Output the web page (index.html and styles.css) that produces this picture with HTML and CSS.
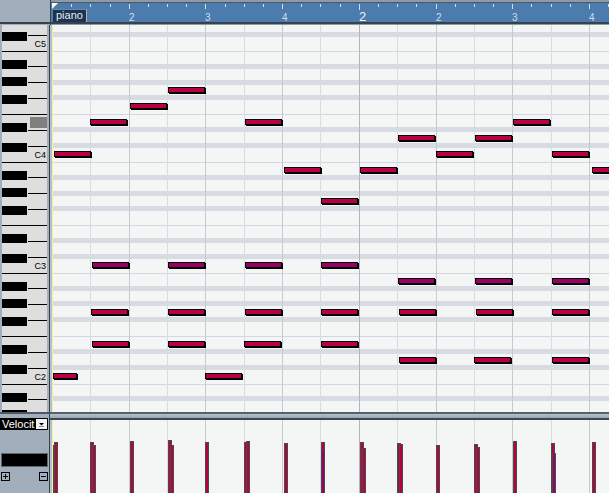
FILE: index.html
```html
<!DOCTYPE html>
<html>
<head>
<meta charset="utf-8">
<title>Key Editor</title>
<link rel="stylesheet" href="styles.css">
</head>
<body>
<div class="app">
  <div class="corner"></div>

  <div class="ruler">
    <svg class="ruler-svg" width="558" height="25" viewBox="51 0 558 25">
      <g class="ticks">
        <rect x="71" y="4" width="1" height="3"/><rect x="90" y="4" width="1" height="3"/><rect x="110" y="4" width="1" height="3"/>
        <rect x="129" y="4" width="1" height="5"/>
        <rect x="148" y="4" width="1" height="3"/><rect x="167" y="4" width="1" height="3"/><rect x="186" y="4" width="1" height="3"/>
        <rect x="205" y="4" width="1" height="5"/>
        <rect x="225" y="4" width="1" height="3"/><rect x="244" y="4" width="1" height="3"/><rect x="263" y="4" width="1" height="3"/>
        <rect x="282" y="4" width="1" height="5"/>
        <rect x="301" y="4" width="1" height="3"/><rect x="320" y="4" width="1" height="3"/><rect x="340" y="4" width="1" height="3"/>
        <rect x="359" y="4" width="1" height="6"/>
        <rect x="378" y="4" width="1" height="3"/><rect x="397" y="4" width="1" height="3"/><rect x="416" y="4" width="1" height="3"/>
        <rect x="436" y="4" width="1" height="5"/>
        <rect x="455" y="4" width="1" height="3"/><rect x="474" y="4" width="1" height="3"/><rect x="493" y="4" width="1" height="3"/>
        <rect x="512" y="4" width="1" height="5"/>
        <rect x="531" y="4" width="1" height="3"/><rect x="551" y="4" width="1" height="3"/><rect x="570" y="4" width="1" height="3"/>
        <rect x="589" y="4" width="1" height="5"/>
        <rect x="608" y="4" width="1" height="3"/>
      </g>
      <g class="beat-num">
        <text x="129" y="21">2</text>
        <text x="205" y="21">3</text>
        <text x="282" y="21">4</text>
        <text x="436" y="21">2</text>
        <text x="512" y="21">3</text>
        <text x="589" y="21">4</text>
      </g>
      <text class="bar-num" x="359" y="21">2</text>
      <polygon class="start-mark" points="52,3 58,3 52,9"/>
    </svg>
    <div class="track-label">piano</div>
  </div>

  <div class="keyboard">
    <svg width="50" height="387" viewBox="0 25 50 387">
      <rect class="kb-frame" x="0" y="25" width="50" height="387"/>
      <rect class="kb-keys" x="2" y="25" width="45" height="387"/>
      <rect class="kb-edge" x="49" y="25" width="1" height="387"/>
      <g class="kb-lines">
        <rect x="2" y="51" width="45" height="1"/>
        <rect x="2" y="114" width="45" height="1"/>
        <rect x="2" y="162" width="45" height="1"/>
        <rect x="2" y="225" width="45" height="1"/>
        <rect x="2" y="273" width="45" height="1"/>
        <rect x="2" y="336" width="45" height="1"/>
        <rect x="2" y="384" width="45" height="1"/>
        <rect x="28" y="35" width="19" height="1"/>
        <rect x="28" y="66" width="19" height="1"/><rect x="28" y="82" width="19" height="1"/><rect x="28" y="98" width="19" height="1"/>
        <rect x="28" y="130" width="19" height="1"/><rect x="28" y="146" width="19" height="1"/>
        <rect x="28" y="177" width="19" height="1"/><rect x="28" y="193" width="19" height="1"/><rect x="28" y="209" width="19" height="1"/>
        <rect x="28" y="241" width="19" height="1"/><rect x="28" y="257" width="19" height="1"/>
        <rect x="28" y="288" width="19" height="1"/><rect x="28" y="304" width="19" height="1"/><rect x="28" y="320" width="19" height="1"/>
        <rect x="28" y="352" width="19" height="1"/><rect x="28" y="368" width="19" height="1"/>
        <rect x="28" y="399" width="19" height="1"/>
      </g>
      <g class="kb-black">
        <rect x="2" y="32" width="25" height="9"/>
        <rect x="2" y="60" width="25" height="9"/><rect x="2" y="77" width="25" height="9"/><rect x="2" y="95" width="25" height="9"/>
        <rect x="2" y="123" width="25" height="9"/><rect x="2" y="143" width="25" height="9"/>
        <rect x="2" y="171" width="25" height="9"/><rect x="2" y="188" width="25" height="9"/><rect x="2" y="206" width="25" height="9"/>
        <rect x="2" y="234" width="25" height="9"/><rect x="2" y="254" width="25" height="9"/>
        <rect x="2" y="282" width="25" height="9"/><rect x="2" y="299" width="25" height="9"/><rect x="2" y="317" width="25" height="9"/>
        <rect x="2" y="345" width="25" height="9"/><rect x="2" y="365" width="25" height="9"/>
        <rect x="2" y="393" width="25" height="9"/><rect x="2" y="410" width="25" height="9"/>
      </g>
      <rect class="kb-hover" x="30" y="117" width="17" height="11"/>
      <g class="kb-label">
        <text x="46" y="47">C5</text>
        <text x="46" y="158">C4</text>
        <text x="46" y="269">C3</text>
        <text x="46" y="380">C2</text>
      </g>
    </svg>
  </div>

  <div class="editor">
    <div class="edge"></div>
    <div class="canvas">
      <svg class="grid" width="556" height="387" viewBox="53 25 556 387">
        <rect class="grid-bg" x="53" y="25" width="556" height="387"/>
        <g class="band">
          <rect x="53" y="32" width="556" height="5"/>
          <rect x="53" y="64" width="556" height="5"/>
          <rect x="53" y="80" width="556" height="5"/>
          <rect x="53" y="95" width="556" height="5"/>
          <rect x="53" y="127" width="556" height="5"/>
          <rect x="53" y="143" width="556" height="5"/>
          <rect x="53" y="175" width="556" height="5"/>
          <rect x="53" y="191" width="556" height="5"/>
          <rect x="53" y="206" width="556" height="5"/>
          <rect x="53" y="238" width="556" height="5"/>
          <rect x="53" y="254" width="556" height="5"/>
          <rect x="53" y="286" width="556" height="5"/>
          <rect x="53" y="301" width="556" height="5"/>
          <rect x="53" y="317" width="556" height="5"/>
          <rect x="53" y="349" width="556" height="5"/>
          <rect x="53" y="365" width="556" height="5"/>
          <rect x="53" y="396" width="556" height="5"/>
        </g>
        <g class="hline">
          <rect x="53" y="51" width="556" height="1"/>
          <rect x="53" y="114" width="556" height="1"/>
          <rect x="53" y="162" width="556" height="1"/>
          <rect x="53" y="225" width="556" height="1"/>
          <rect x="53" y="273" width="556" height="1"/>
          <rect x="53" y="336" width="556" height="1"/>
          <rect x="53" y="384" width="556" height="1"/>
        </g>
        <g class="vline-half">
          <rect x="90" y="25" width="1" height="387"/><rect x="167" y="25" width="1" height="387"/>
          <rect x="244" y="25" width="1" height="387"/><rect x="320" y="25" width="1" height="387"/>
          <rect x="397" y="25" width="1" height="387"/><rect x="474" y="25" width="1" height="387"/>
          <rect x="551" y="25" width="1" height="387"/>
        </g>
        <g class="vline-beat">
          <rect x="129" y="25" width="1" height="387"/><rect x="205" y="25" width="1" height="387"/>
          <rect x="282" y="25" width="1" height="387"/><rect x="436" y="25" width="1" height="387"/>
          <rect x="512" y="25" width="1" height="387"/><rect x="589" y="25" width="1" height="387"/>
        </g>
        <rect class="vline-bar" x="359" y="25" width="1" height="387"/>
      </svg>

      <div class="note" style="left:77px;top:78px;width:37px"></div>
      <div class="note" style="left:115px;top:62px;width:37px"></div>
      <div class="note" style="left:1px;top:126px;width:37px"></div>
      <div class="note" style="left:383px;top:126px;width:37px"></div>
      <div class="note" style="left:499px;top:126px;width:37px"></div>
      <div class="note" style="left:37px;top:94px;width:37px"></div>
      <div class="note" style="left:192px;top:94px;width:37px"></div>
      <div class="note" style="left:460px;top:94px;width:37px"></div>
      <div class="note" style="left:345px;top:110px;width:37px"></div>
      <div class="note" style="left:422px;top:110px;width:37px"></div>
      <div class="note" style="left:231px;top:142px;width:37px"></div>
      <div class="note" style="left:307px;top:142px;width:37px"></div>
      <div class="note" style="left:539px;top:142px;width:37px"></div>
      <div class="note" style="left:268px;top:173px;width:37px"></div>

      <div class="note purple" style="left:39px;top:237px;width:37px"></div>
      <div class="note purple" style="left:115px;top:237px;width:37px"></div>
      <div class="note purple" style="left:192px;top:237px;width:37px"></div>
      <div class="note purple" style="left:268px;top:237px;width:37px"></div>
      <div class="note purple" style="left:345px;top:253px;width:37px"></div>
      <div class="note purple" style="left:422px;top:253px;width:37px"></div>
      <div class="note purple" style="left:499px;top:253px;width:37px"></div>

      <div class="note" style="left:38px;top:284px;width:37px"></div>
      <div class="note" style="left:115px;top:284px;width:37px"></div>
      <div class="note" style="left:192px;top:284px;width:37px"></div>
      <div class="note" style="left:268px;top:284px;width:37px"></div>
      <div class="note" style="left:346px;top:284px;width:37px"></div>
      <div class="note" style="left:423px;top:284px;width:37px"></div>
      <div class="note" style="left:499px;top:284px;width:37px"></div>

      <div class="note" style="left:39px;top:316px;width:37px"></div>
      <div class="note" style="left:115px;top:316px;width:37px"></div>
      <div class="note" style="left:191px;top:316px;width:37px"></div>
      <div class="note" style="left:268px;top:316px;width:37px"></div>

      <div class="note" style="left:346px;top:332px;width:37px"></div>
      <div class="note" style="left:421px;top:332px;width:37px"></div>
      <div class="note" style="left:499px;top:332px;width:37px"></div>

      <div class="note" style="left:0px;top:348px;width:24px"></div>
      <div class="note" style="left:152px;top:348px;width:37px"></div>
    </div>
  </div>

  <div class="vel-panel">
    <div class="lane-select">
      <span class="lane-name">Velocit</span>
      <span class="lane-btn">
        <svg width="11" height="10" viewBox="0 0 11 10"><polygon points="3,4 8,4 5.5,6.5" fill="#000"/><rect x="3" y="7" width="5" height="1" fill="#8a8a8a"/></svg>
      </span>
    </div>
    <div class="lane-display"></div>
    <div class="lane-buttons">
      <svg class="sq-btn" width="9" height="9" viewBox="0 0 9 9"><rect x="0.5" y="0.5" width="8" height="8" fill="none" stroke="#000"/><rect x="2" y="4" width="5" height="1" fill="#000"/><rect x="4" y="2" width="1" height="5" fill="#000"/></svg>
      <svg class="sq-btn" width="9" height="9" viewBox="0 0 9 9"><rect x="0.5" y="0.5" width="8" height="8" fill="none" stroke="#000"/><rect x="2" y="4" width="5" height="1" fill="#000"/></svg>
    </div>
  </div>

  <div class="vel-area">
    <div class="divider"></div>
    <div class="lane">
      <div class="edge"></div>
      <div class="canvas lane-canvas">
        <svg class="grid" width="556" height="73" viewBox="53 420 556 73">
          <rect class="grid-bg" x="53" y="420" width="556" height="73"/>
          <g class="vline-half">
            <rect x="90" y="420" width="1" height="73"/><rect x="167" y="420" width="1" height="73"/>
            <rect x="244" y="420" width="1" height="73"/><rect x="320" y="420" width="1" height="73"/>
            <rect x="397" y="420" width="1" height="73"/><rect x="474" y="420" width="1" height="73"/>
            <rect x="551" y="420" width="1" height="73"/>
          </g>
          <g class="vline-beat">
            <rect x="129" y="420" width="1" height="73"/><rect x="205" y="420" width="1" height="73"/>
            <rect x="282" y="420" width="1" height="73"/><rect x="436" y="420" width="1" height="73"/>
            <rect x="512" y="420" width="1" height="73"/><rect x="589" y="420" width="1" height="73"/>
          </g>
          <rect class="vline-bar" x="359" y="420" width="1" height="73"/>
        </svg>
        <div class="bar" style="left:0px;top:25px"></div>
        <div class="bar" style="left:1px;top:22px"></div>
        <div class="bar" style="left:37px;top:22px"></div>
        <div class="bar" style="left:39px;top:25px"></div>
        <div class="bar" style="left:77px;top:21px"></div>
        <div class="bar" style="left:115px;top:20px"></div>
        <div class="bar" style="left:117px;top:25px"></div>
        <div class="bar" style="left:152px;top:22px"></div>
        <div class="bar" style="left:191px;top:22px"></div>
        <div class="bar" style="left:193px;top:21px"></div>
        <div class="bar" style="left:231px;top:23px"></div>
        <div class="bar" style="left:268px;top:22px"></div>
        <div class="bar purple" style="left:268px;top:30px"></div>
        <div class="bar" style="left:307px;top:22px"></div>
        <div class="bar" style="left:309px;top:28px"></div>
        <div class="bar" style="left:344px;top:23px"></div>
        <div class="bar" style="left:346px;top:24px"></div>
        <div class="bar" style="left:383px;top:25px"></div>
        <div class="bar" style="left:421px;top:24px"></div>
        <div class="bar" style="left:423px;top:27px"></div>
        <div class="bar" style="left:460px;top:21px"></div>
        <div class="bar" style="left:498px;top:23px"></div>
        <div class="bar purple" style="left:499px;top:33px"></div>
        <div class="bar" style="left:539px;top:22px"></div>
      </div>
    </div>
  </div>
</div>
</body>
</html>
```

FILE: styles.css
```css
* {
  box-sizing: border-box;
  margin: 0;
  padding: 0;
}

html, body {
  width: 609px;
  height: 493px;
  overflow: hidden;
  background: #a2aebb;
  font-family: "Liberation Sans", Arial, sans-serif;
}

.app {
  display: grid;
  grid-template-columns: 50px 559px;
  grid-template-rows: 25px 387px 81px;
  width: 609px;
  height: 493px;
}

/* ---------- top row ---------- */
.corner {
  background: linear-gradient(to bottom, #a2aebb 0 22px, #38424c 22px 24px, #a2aebb 24px);
}

.ruler {
  position: relative;
  border-left: 1px solid #38424c;
  background: linear-gradient(to bottom, #8e9aa6 0 2px, #4e5862 2px 3px, #4b7cad 3px 22px, #38424c 22px 24px, #8c98a4 24px);
}

.ruler-svg {
  display: block;
}

.ticks rect {
  fill: #d4dee8;
}

.beat-num text {
  font-family: "Liberation Sans", Arial, sans-serif;
  font-size: 10px;
  fill: #d4dee8;
}

.bar-num {
  font-family: "Liberation Sans", Arial, sans-serif;
  font-size: 13px;
  fill: #eef3f8;
}

.start-mark {
  fill: #ffffff;
}

.track-label {
  position: absolute;
  left: 2px;
  top: 9px;
  width: 34px;
  height: 13px;
  background: #1d3350;
  border-top: 1px solid #6a88a8;
  border-right: 1px solid #a6b6c6;
  color: #e4ecf4;
  font-size: 11px;
  line-height: 11px;
  padding-left: 3px;
}

/* ---------- keyboard ---------- */
.keyboard svg {
  display: block;
}

.kb-frame { fill: #a2aebb; }
.kb-keys { fill: #dedede; }
.kb-edge { fill: #38424c; }
.kb-lines rect { fill: #000; }
.kb-black rect { fill: #000; }
.kb-hover { fill: #808080; }

.kb-label text {
  font-family: "Liberation Sans", Arial, sans-serif;
  font-size: 9px;
  fill: #000;
  text-anchor: end;
}

/* ---------- note editor ---------- */
.editor {
  display: flex;
}

.edge {
  width: 3px;
  flex: none;
  background: linear-gradient(to right, #b6c0ca 0 2px, #f8f28e 2px 3px);
}

.canvas {
  position: relative;
  width: 556px;
  height: 387px;
  overflow: hidden;
}

.grid {
  display: block;
}

.grid-bg { fill: #f4f6f6; }
.band rect { fill: #d6dce1; }
.hline rect { fill: #d4d8dc; }
.vline-half rect { fill: #d8dcdf; }
.vline-beat rect { fill: #c6cace; }
.vline-bar { fill: #b2b6ba; }

.note {
  position: absolute;
  height: 6px;
  background: #b80045;
  border: 1px solid #000;
  box-shadow: 1px 1px 0 #000;
}

.note.purple {
  background: #990066;
}

/* ---------- velocity ---------- */
.vel-panel {
  background: #a2aebb;
  border-top: 2px solid #4e5862;
  border-right: 1px solid #38424c;
  padding-top: 4px;
  display: flex;
  flex-direction: column;
}

.lane-select {
  display: flex;
  justify-content: space-between;
  width: 48px;
  height: 12px;
  background: #000;
}

.lane-name {
  color: #fff;
  font-size: 11px;
  line-height: 12px;
  padding-left: 2px;
  white-space: nowrap;
}

.lane-btn {
  width: 11px;
  height: 10px;
  margin-top: 1px;
  margin-right: 1px;
  background: #f2f2f2;
}

.lane-btn svg {
  display: block;
}

.lane-display {
  margin-top: 23px;
  margin-left: 1px;
  width: 47px;
  height: 14px;
  background: #000;
  border: 1px solid #5c6670;
}

.lane-buttons {
  margin-top: 5px;
  padding-left: 1px;
  width: 48px;
  display: flex;
  justify-content: space-between;
}

.sq-btn {
  display: block;
}

.vel-area {
  display: flex;
  flex-direction: column;
}

.divider {
  height: 8px;
  background: linear-gradient(to bottom, #56606a 0 2px, #b6c2ce 2px, #98a4b0 6px, #3e4852 6px 8px);
}

.lane {
  display: flex;
  height: 73px;
}

.lane-canvas {
  height: 73px;
}

.bar {
  position: absolute;
  bottom: 0;
  width: 4px;
  background: #b80045;
  border: 1px solid #4a4a4a;
  border-bottom: none;
}

.bar.purple {
  background: #990066;
}
```
